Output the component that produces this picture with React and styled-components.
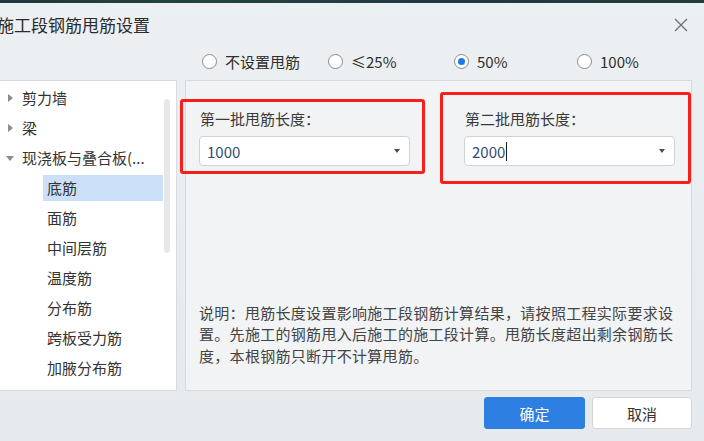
import React from 'react';
import styled, { createGlobalStyle } from 'styled-components';

const GlobalStyle = createGlobalStyle`
  html, body {
    margin: 0;
    padding: 0;
    background: #eaedef;
  }
  body {
    font-family: "Noto Sans CJK SC", "Noto Sans", "Liberation Sans", sans-serif;
    color: #333;
  }
  * {
    box-sizing: border-box;
  }
`;

const radios = [
  { label: '不设置甩筋', width: 126 },
  { label: '≤25%', width: 126 },
  { label: '50%', width: 123, checked: true },
  { label: '100%', width: 110 },
];

const tree = [
  { label: '剪力墙', level: 0, arrow: 'right' },
  { label: '梁', level: 0, arrow: 'right' },
  { label: '现浇板与叠合板(...', level: 0, arrow: 'down' },
  { label: '底筋', level: 1, selected: true },
  { label: '面筋', level: 1 },
  { label: '中间层筋', level: 1 },
  { label: '温度筋', level: 1 },
  { label: '分布筋', level: 1 },
  { label: '跨板受力筋', level: 1 },
  { label: '加腋分布筋', level: 1 },
];

const App = () => {
  return (
    <>
      <GlobalStyle />
      <Dialog>
        <DesktopStrip />
        <Header>
          <Title>施工段钢筋甩筋设置</Title>
          <CloseButton>
            <svg width="14" height="14" viewBox="0 0 14 14">
              <path d="M1 1 L13 13 M13 1 L1 13" stroke="#6b6f73" strokeWidth="1.3" fill="none" />
            </svg>
          </CloseButton>
        </Header>

        <RadioRow>
          {radios.map((r) => (
            <RadioItem key={r.label} $width={r.width}>
              <RadioCircle $checked={r.checked} />
              <span>{r.label}</span>
            </RadioItem>
          ))}
        </RadioRow>

        <Body>
          <TreePanel>
            {tree.map((t) => (
              <TreeRow key={t.label} $level={t.level}>
                {t.arrow && <Arrow $dir={t.arrow} />}
                <TreeLabel $selected={t.selected} $level={t.level}>{t.label}</TreeLabel>
              </TreeRow>
            ))}
            <ScrollThumb />
          </TreePanel>

          <SettingsPanel>
            <FieldRow>
              <Field>
                <Marker $l={-19} $t={-9} $r={-15} $b={-8} />
                <FieldLabel>第一批甩筋长度：</FieldLabel>
                <Select>
                  <SelectValue>1000</SelectValue>
                  <Caret />
                </Select>
              </Field>
              <Field>
                <Marker $l={-24} $t={-16} $r={-16} $b={-18} />
                <FieldLabel>第二批甩筋长度：</FieldLabel>
                <Select>
                  <SelectValue>
                    2000
                    <TextCursor />
                  </SelectValue>
                  <Caret />
                </Select>
              </Field>
            </FieldRow>
            <Note>
              说明：甩筋长度设置影响施工段钢筋计算结果，请按照工程实际要求设置。先施工的钢筋甩入后施工的施工段计算。甩筋长度超出剩余钢筋长度，本根钢筋只断开不计算甩筋。
            </Note>
          </SettingsPanel>
        </Body>

        <Footer>
          <Button $primary>确定</Button>
          <Button>取消</Button>
        </Footer>
      </Dialog>
    </>
  );
};

export default App;

const Dialog = styled.div`
  width: 704px;
  height: 441px;
  overflow: hidden;
  display: flex;
  flex-direction: column;
  background: linear-gradient(180deg, #edf0f2 0%, #e9ecee 60%, #e6eaec 100%);
`;

const DesktopStrip = styled.div`
  height: 3px;
  background: linear-gradient(90deg, #1d3a3c, #24443f 30%, #1f3a44 60%, #213e3a);
`;

const Header = styled.div`
  height: 43px;
  display: flex;
  align-items: center;
  justify-content: space-between;
  padding-right: 15px;
`;

const Title = styled.div`
  margin-left: -3px;
  font-size: 17px;
  color: #2b2b2b;
  letter-spacing: 0;
`;

const CloseButton = styled.div`
  width: 16px;
  height: 16px;
  display: flex;
  align-items: center;
  justify-content: center;
`;

const RadioRow = styled.div`
  height: 30px;
  margin-bottom: 4px;
  padding-left: 202px;
  display: flex;
  align-items: center;
`;

const RadioItem = styled.label`
  width: ${(p) => p.$width}px;
  display: flex;
  align-items: center;
  gap: 8px;
  font-size: 15px;
  color: #2e2e2e;
`;

const RadioCircle = styled.span`
  width: 15px;
  height: 15px;
  border-radius: 50%;
  border: 1px solid #8a8a8a;
  background: #fff;
  position: relative;
  flex-shrink: 0;

  &::after {
    content: '';
    display: ${(p) => (p.$checked ? 'block' : 'none')};
    position: absolute;
    left: 3px;
    top: 3px;
    width: 7px;
    height: 7px;
    border-radius: 50%;
    background: #1f78e6;
  }
`;

const Body = styled.div`
  height: 311px;
  display: flex;
  gap: 8px;
  padding-right: 12px;
`;

const TreePanel = styled.div`
  position: relative;
  width: 179px;
  background: #fff;
  border: 1px solid #d8dbdd;
  border-left: none;
  padding-top: 2px;
`;

const TreeRow = styled.div`
  height: 30px;
  display: flex;
  align-items: center;
  position: relative;
  padding-left: ${(p) => (p.$level ? 43 : 22)}px;
`;

const Arrow = styled.span`
  position: absolute;
  left: ${(p) => (p.$dir === 'down' ? 6 : 8)}px;
  top: 50%;
  width: 0;
  height: 0;
  ${(p) =>
    p.$dir === 'down'
      ? `
    margin-top: -2px;
    border-left: 4px solid transparent;
    border-right: 4px solid transparent;
    border-top: 5px solid #8c8c8c;
  `
      : `
    margin-top: -4px;
    border-top: 4px solid transparent;
    border-bottom: 4px solid transparent;
    border-left: 5px solid #8c8c8c;
  `}
`;

const TreeLabel = styled.span`
  font-size: 15px;
  color: #333;
  height: 26px;
  line-height: 26px;
  padding-left: ${(p) => (p.$level ? 4 : 0)}px;
  width: ${(p) => (p.$level ? '120px' : 'auto')};
  white-space: nowrap;
  background: ${(p) => (p.$selected ? '#cbe0f8' : 'transparent')};
`;

const ScrollThumb = styled.div`
  position: absolute;
  right: 6px;
  top: 18px;
  width: 6px;
  height: 154px;
  border-radius: 3px;
  background: #e6e7e8;
`;

const SettingsPanel = styled.div`
  flex: 1;
  background: #f1f3f4;
  border: 1px solid #d8dbdd;
  padding: 27px 14px 24px 13px;
  display: flex;
  flex-direction: column;
`;

const FieldRow = styled.div`
  display: flex;
  gap: 54px;
`;

const Field = styled.div`
  position: relative;
  width: 211px;
  display: flex;
  flex-direction: column;
  gap: 7px;
`;

const Marker = styled.div`
  position: absolute;
  left: ${(p) => p.$l}px;
  top: ${(p) => p.$t}px;
  right: ${(p) => p.$r}px;
  bottom: ${(p) => p.$b}px;
  border: 3.5px solid #f5201c;
  border-radius: 3px;
  pointer-events: none;
`;

const FieldLabel = styled.div`
  font-size: 15px;
  line-height: 21px;
  color: #3a3a3a;
  padding-left: 1px;
`;

const Select = styled.div`
  height: 30px;
  background: #fff;
  border: 1px solid #cfd3d6;
  border-radius: 4px;
  display: flex;
  align-items: center;
  justify-content: space-between;
  padding: 0 9px 0 7px;
`;

const SelectValue = styled.span`
  font-size: 15px;
  color: #2f4d78;
  display: flex;
  align-items: center;
`;

const TextCursor = styled.span`
  display: inline-block;
  width: 1px;
  height: 19px;
  margin-left: 1px;
  background: #1a1a1a;
`;

const Caret = styled.span`
  width: 0;
  height: 0;
  border-left: 3.5px solid transparent;
  border-right: 3.5px solid transparent;
  border-top: 4px solid #4a4f55;
`;

const Note = styled.div`
  margin-top: auto;
  width: 478px;
  font-size: 15px;
  line-height: 21.5px;
  letter-spacing: 0.3px;
  color: #444;
`;

const Footer = styled.div`
  display: flex;
  justify-content: flex-end;
  gap: 7px;
  padding: 6px 12px 12px 0;
`;

const Button = styled.button`
  width: ${(p) => (p.$primary ? 101 : 100)}px;
  height: 32px;
  border-radius: 3px;
  font-family: inherit;
  font-size: 15px;
  cursor: pointer;
  border: 1px solid ${(p) => (p.$primary ? '#2b7fe0' : '#d3d6d9')};
  background: ${(p) => (p.$primary ? '#2d80e2' : '#fff')};
  color: ${(p) => (p.$primary ? '#fff' : '#333')};
`;
